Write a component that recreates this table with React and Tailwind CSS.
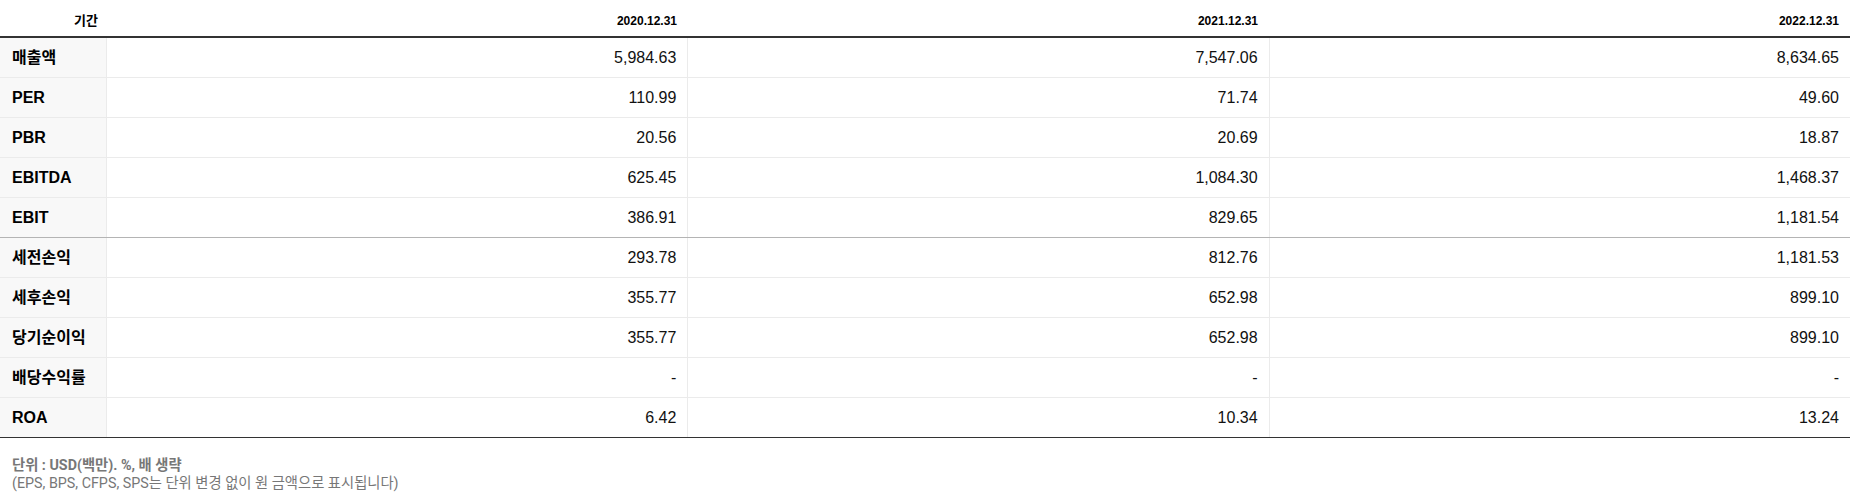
const columns = ['2020.12.31', '2021.12.31', '2022.12.31'];

const rows = [
  { label: '매출액', values: ['5,984.63', '7,547.06', '8,634.65'] },
  { label: 'PER', values: ['110.99', '71.74', '49.60'] },
  { label: 'PBR', values: ['20.56', '20.69', '18.87'] },
  { label: 'EBITDA', values: ['625.45', '1,084.30', '1,468.37'] },
  { label: 'EBIT', values: ['386.91', '829.65', '1,181.54'], divider: true },
  { label: '세전손익', values: ['293.78', '812.76', '1,181.53'] },
  { label: '세후손익', values: ['355.77', '652.98', '899.10'] },
  { label: '당기순이익', values: ['355.77', '652.98', '899.10'] },
  { label: '배당수익률', values: ['-', '-', '-'] },
  { label: 'ROA', values: ['6.42', '10.34', '13.24'], last: true },
];

const tableFont = { fontFamily: '"Liberation Sans", "Noto Sans CJK KR", sans-serif' };
const noteFont = { fontFamily: 'Roboto, "Noto Sans CJK KR", sans-serif' };

function Row({ row }) {
  let border = 'border-b border-[#ebebeb]';
  if (row.divider) border = 'border-b border-[#b4b4b4]';
  if (row.last) border = 'border-b border-[#333333]';

  return (
    <div className={`flex h-10 ${border}`}>
      <div className="w-[107px] shrink-0 flex items-center pl-3 bg-[#f8f8f8] border-r border-[#ebebeb] text-base font-bold text-black">
        {row.label}
      </div>
      {row.values.map((v, i) => (
        <div
          key={i}
          className={`flex-1 flex items-center justify-end pr-[11px] text-base text-[#111] ${i < 2 ? 'border-r border-[#ebebeb]' : ''}`}
        >
          {v}
        </div>
      ))}
    </div>
  );
}

export default function App() {
  return (
    <div className="w-[1850px] h-[499px] bg-white overflow-hidden">
      <div style={tableFont}>
        <div className="flex h-[38px] border-b-2 border-[#333333]">
          <div className="w-[107px] shrink-0 flex items-end justify-end pr-[9px] pb-[8px] text-[13px] font-bold text-black leading-[14px]">
            기간
          </div>
          {columns.map((c) => (
            <div key={c} className="flex-1 flex items-end justify-end pr-[11px] pb-[8px] text-xs font-bold text-black leading-[14px]">
              {c}
            </div>
          ))}
        </div>
        {rows.map((r) => (
          <Row key={r.label} row={r} />
        ))}
      </div>

      <div className="pl-3 pt-[18px] text-[14.3px] leading-[18px] text-[#777777]" style={noteFont}>
        <p className="font-bold">단위 : USD(백만). %, 배 생략</p>
        <p>(EPS, BPS, CFPS, SPS는 단위 변경 없이 원 금액으로 표시됩니다)</p>
      </div>
    </div>
  );
}
